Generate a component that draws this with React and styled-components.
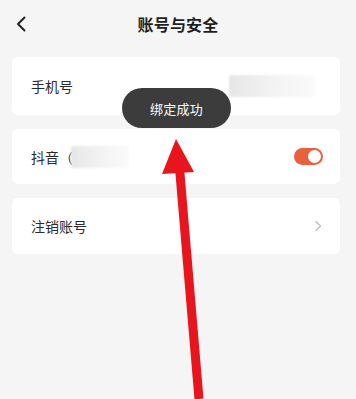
import React from 'react';
import styled, { createGlobalStyle } from 'styled-components';

const GlobalStyle = createGlobalStyle`
    html, body {
        margin: 0;
        padding: 0;
        background: #f5f5f5;
        font-family: "Noto Sans CJK SC", "Noto Sans", sans-serif;
    }
`;

const Page = styled.div`
    position: relative;
    width: 356px;
    height: 399px;
    overflow: hidden;
    background: #f5f5f5;
`;

const Header = styled.div`
    height: 48px;
    display: flex;
    align-items: center;
    justify-content: center;
    position: relative;
`;

const BackButton = styled.div`
    position: absolute;
    left: 14px;
    top: 14px;
    width: 16px;
    height: 18px;
`;

const Title = styled.div`
    font-size: 16px;
    font-weight: 600;
    color: #1f1f1f;
    letter-spacing: 0.2px;
`;

const List = styled.div`
    display: flex;
    flex-direction: column;
    gap: 14px;
    padding: 9px 16px 0 12px;
`;

const Card = styled.div`
    height: ${(p) => p.h}px;
    background: #fff;
    border-radius: 6px;
    display: flex;
    align-items: center;
    padding: 0 18px 0 19px;
`;

const Label = styled.div`
    font-size: 14px;
    color: #2a2a2a;
    display: flex;
    align-items: center;
`;

const Blur = styled.div`
    width: ${(p) => p.w}px;
    height: 22px;
    margin-left: ${(p) => p.ml || 0}px;
    background: linear-gradient(90deg, #e6e6e6 0%, #f0f0f0 40%, #f6f6f6 70%, #fafafa 100%);
    border-radius: 2px;
    filter: blur(1px);
`;

const Spacer = styled.div`
    flex: 1;
`;

const Toggle = styled.div`
    width: 29px;
    height: 17px;
    border-radius: 9px;
    background: #e8603c;
    position: relative;
    margin-right: -1px;
    &::after {
        content: '';
        position: absolute;
        right: 2px;
        top: 2px;
        width: 13px;
        height: 13px;
        border-radius: 50%;
        background: #fff;
    }
`;

const Toast = styled.div`
    position: absolute;
    left: 122px;
    top: 88px;
    width: 109px;
    height: 40px;
    border-radius: 20px;
    background: #3c3c3c;
    color: #fff;
    font-size: 13px;
    display: flex;
    align-items: center;
    justify-content: center;
    letter-spacing: 0.3px;
`;

const Arrow = styled.svg`
    position: absolute;
    left: 0;
    top: 0;
    pointer-events: none;
`;

const ChevronLeft = () => (
    <svg width="16" height="18" viewBox="0 0 16 18">
        <path d="M10.5 2.5 L4 9 L10.5 15.5" fill="none" stroke="#222" strokeWidth="2" strokeLinecap="round" strokeLinejoin="round" />
    </svg>
);

const ChevronRight = () => (
    <svg width="8" height="12" viewBox="0 0 8 12">
        <path d="M2 1.5 L6.5 6 L2 10.5" fill="none" stroke="#bdbdbd" strokeWidth="1.3" strokeLinecap="round" strokeLinejoin="round" />
    </svg>
);

export default function App() {
    return (
        <Page>
            <GlobalStyle />
            <Header>
                <BackButton>
                    <ChevronLeft />
                </BackButton>
                <Title>账号与安全</Title>
            </Header>
            <List>
                <Card h={58}>
                    <Label>手机号</Label>
                    <Spacer />
                    <Blur w={86} style={{ marginRight: 7 }} />
                </Card>
                <Card h={55}>
                    <Label>
                        抖音（
                        <Blur w={58} ml={-2} />
                    </Label>
                    <Spacer />
                    <Toggle />
                </Card>
                <Card h={56}>
                    <Label>注销账号</Label>
                    <Spacer />
                    <ChevronRight />
                </Card>
            </List>
            <Toast>绑定成功</Toast>
            <Arrow width="356" height="399" viewBox="0 0 356 399">
                <path d="M179.5 168 L199 399" stroke="#e8141e" strokeWidth="9" fill="none" />
                <polygon points="176,139 162,174 194,172" fill="#e8141e" />
            </Arrow>
        </Page>
    );
}
